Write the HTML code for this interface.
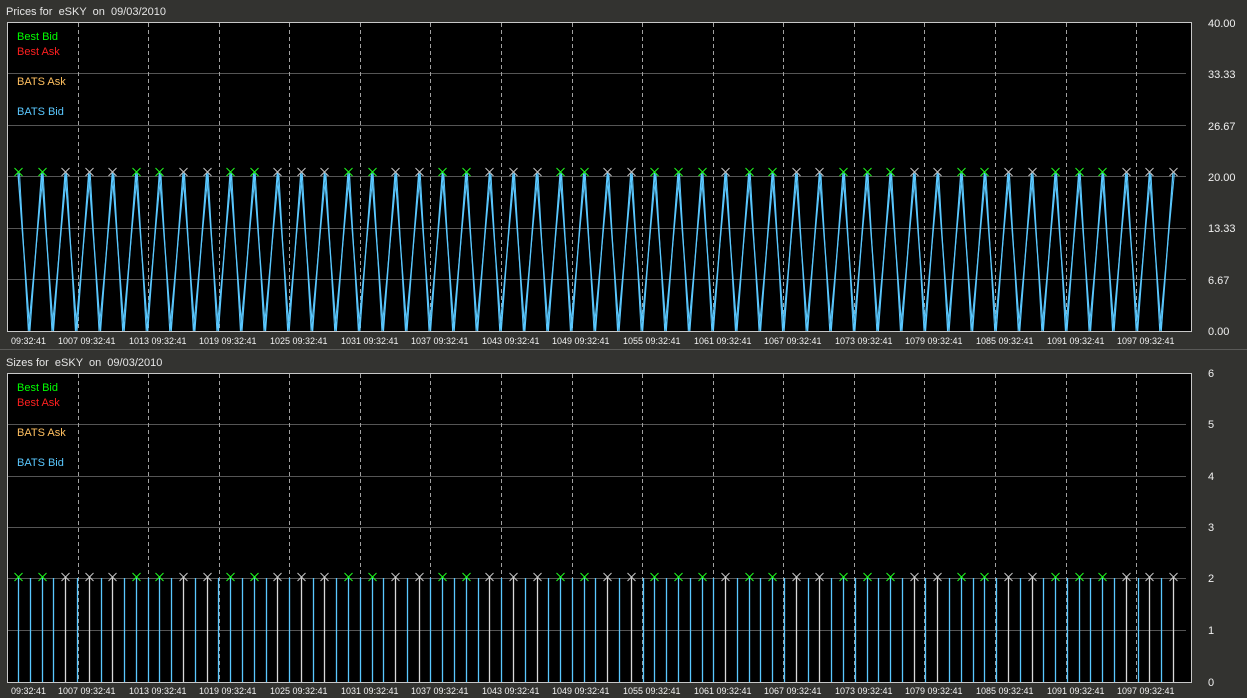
<!DOCTYPE html>
<html><head><meta charset="utf-8">
<style>
html,body{margin:0;padding:0;background:#333330;width:1247px;height:698px;overflow:hidden}
svg{display:block;font-family:"Liberation Sans",sans-serif}
text{white-space:pre}
.t{fill:#e6e6e6;font-size:11px}
.y{fill:#f0f0f0;font-size:11px}
.x{fill:#f0f0f0;font-size:9px}
</style></head><body>
<svg id="s" width="1247" height="698" xmlns="http://www.w3.org/2000/svg" xml:space="preserve">
<rect x="0" y="0" width="1247" height="698" fill="#333330"/>
<line x1="0" y1="349.5" x2="1247" y2="349.5" stroke="#5a5a58"/>
<rect x="7.5" y="22.5" width="1184" height="309" fill="#000" stroke="#c8c8c8"/>
<rect x="7.5" y="373.5" width="1184" height="309" fill="#000" stroke="#c8c8c8"/>
<g id="g"></g>
<text class="t" x="6" y="15">Prices for  eSKY  on  09/03/2010</text>
<text class="t" x="6" y="366">Sizes for  eSKY  on  09/03/2010</text>
<g font-size="11">
<text x="17" y="40" fill="#00ff00">Best Bid</text>
<text x="17" y="55" fill="#ff2020">Best Ask</text>
<text x="17" y="85" fill="#ffc060">BATS Ask</text>
<text x="17" y="115" fill="#5ac8ff">BATS Bid</text>
<text x="17" y="391" fill="#00ff00">Best Bid</text>
<text x="17" y="406" fill="#ff2020">Best Ask</text>
<text x="17" y="436" fill="#ffc060">BATS Ask</text>
<text x="17" y="466" fill="#5ac8ff">BATS Bid</text>
</g>
<g class="y">
<text x="1208" y="27">40.00</text><text x="1208" y="78">33.33</text><text x="1208" y="130">26.67</text><text x="1208" y="181">20.00</text><text x="1208" y="232">13.33</text><text x="1208" y="284">6.67</text><text x="1208" y="335">0.00</text>
<text x="1208" y="377">6</text><text x="1208" y="428">5</text><text x="1208" y="480">4</text><text x="1208" y="531">3</text><text x="1208" y="582">2</text><text x="1208" y="634">1</text><text x="1208" y="686">0</text>
</g>
<g class="x">
<text x="11" y="344">09:32:41</text>
<text x="58" y="344">1007 09:32:41</text><text x="129" y="344">1013 09:32:41</text><text x="199" y="344">1019 09:32:41</text><text x="270" y="344">1025 09:32:41</text><text x="341" y="344">1031 09:32:41</text><text x="411" y="344">1037 09:32:41</text><text x="482" y="344">1043 09:32:41</text><text x="552" y="344">1049 09:32:41</text><text x="623" y="344">1055 09:32:41</text><text x="694" y="344">1061 09:32:41</text><text x="764" y="344">1067 09:32:41</text><text x="835" y="344">1073 09:32:41</text><text x="905" y="344">1079 09:32:41</text><text x="976" y="344">1085 09:32:41</text><text x="1047" y="344">1091 09:32:41</text><text x="1117" y="344">1097 09:32:41</text>
<text x="11" y="694">09:32:41</text>
<text x="58" y="694">1007 09:32:41</text><text x="129" y="694">1013 09:32:41</text><text x="199" y="694">1019 09:32:41</text><text x="270" y="694">1025 09:32:41</text><text x="341" y="694">1031 09:32:41</text><text x="411" y="694">1037 09:32:41</text><text x="482" y="694">1043 09:32:41</text><text x="552" y="694">1049 09:32:41</text><text x="623" y="694">1055 09:32:41</text><text x="694" y="694">1061 09:32:41</text><text x="764" y="694">1067 09:32:41</text><text x="835" y="694">1073 09:32:41</text><text x="905" y="694">1079 09:32:41</text><text x="976" y="694">1085 09:32:41</text><text x="1047" y="694">1091 09:32:41</text><text x="1117" y="694">1097 09:32:41</text>
</g>
</svg>
<script>
var g=document.getElementById('g'),h='';
function L(a,b,c,d,s,e){h+='<line x1="'+a+'" y1="'+b+'" x2="'+c+'" y2="'+d+'" stroke="'+s+'"'+(e||'')+'/>';}
[[22,331,[73.5,125.5,176.5,228.5,279.5]],[373,682,[424.5,476.5,527.5,578.5,630.5]]].forEach(function(p){
 p[2].forEach(function(y){L(8,y,1186,y,'#555');});
 for(var k=0;k<16;k++){var x=Math.round(77.5+k*70.58)+.5;L(x,p[0]+1,x,p[1],'#a0a0a0',' stroke-dasharray="4,3"');}
});
var gr="ggwwwggwwggwwwggwwggwwwggwwgggwggwwgggwwggwwgggwww";
var pts=[],pts2=[];
for(var i=0;i<50;i++){var m=18+i*23.57;pts.push(m.toFixed(1)+',173');pts2.push((m+1.5).toFixed(1)+',173');
 if(i<49){pts.push((m+11.8).toFixed(1)+',331');pts2.push((m+10.3).toFixed(1)+',331');}}
h+='<polyline points="'+pts2.join(' ')+'" fill="none" stroke="#5ac8ff" stroke-width="1"/>';
h+='<polyline points="'+pts.join(' ')+'" fill="none" stroke="#5ac8ff" stroke-width="1.3"/>';
for(var i=0;i<50;i++){var m=Math.round(18+i*23.57)+.5,c=gr[i]=='g'?'#5ac8ff':'#d8d8d8';
 L(m,578,m,682,c,' stroke-width="1.3"');
 if(i<49){var q=Math.round(18+i*23.57+11.8)+.5;L(q,578,q,682,'#5ac8ff',' stroke-width="1.3"');}
 var mc=gr[i]=='g'?'#20ff20':'#c8c8c8';
 [172,577].forEach(function(y){L(m-4,y-4,m+4,y+4,mc);L(m-4,y+4,m+4,y-4,mc);});
}
g.innerHTML=h;
</script>
</body></html>
